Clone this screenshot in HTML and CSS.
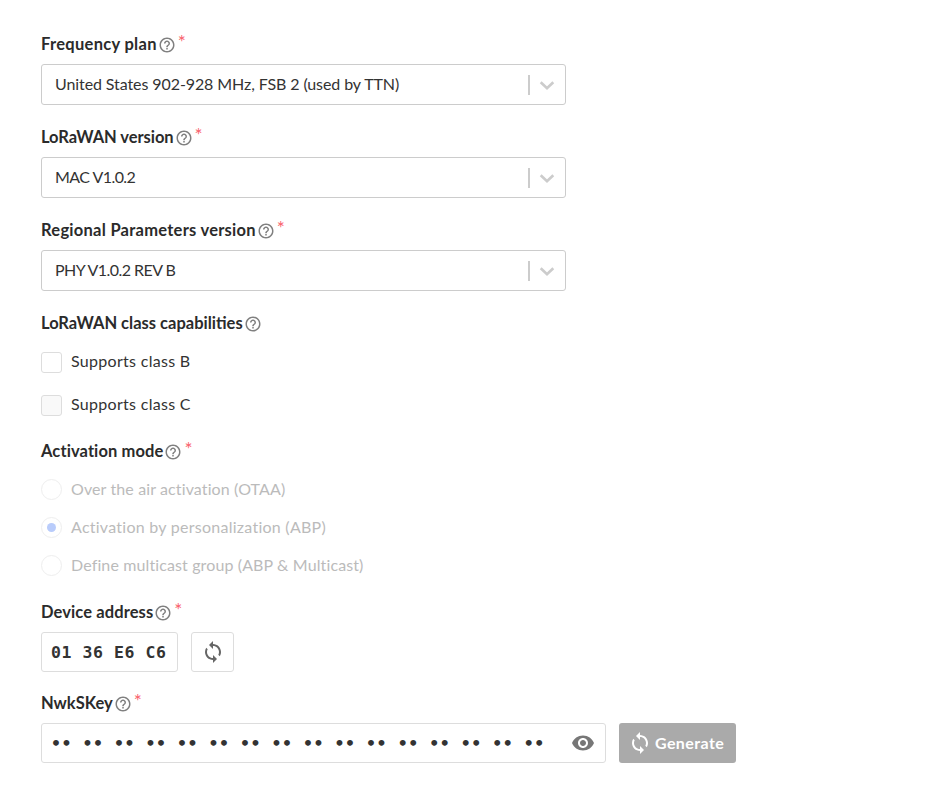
FILE: index.html
```html
<!DOCTYPE html>
<html lang="en">
<head>
    <meta charset="UTF-8">
    <meta name="viewport" content="width=device-width, initial-scale=1.0">
    <title>Register end device</title>
    <link rel="stylesheet" href="styles.css">
</head>
<body>
    <svg class="sprites" width="0" height="0">
        <symbol id="help" viewBox="0 0 24 24"><path d="M11 18h2v-2h-2v2zm1-16C6.48 2 2 6.48 2 12s4.48 10 10 10 10-4.48 10-10S17.52 2 12 2zm0 18c-4.41 0-8-3.59-8-8s3.59-8 8-8 8 3.59 8 8-3.59 8-8 8zm0-14c-2.21 0-4 1.79-4 4h2c0-1.1.9-2 2-2s2 .9 2 2c0 2-3 1.75-3 5h2c0-2.25 3-2.5 3-5 0-2.21-1.79-4-4-4z"/></symbol>
        <symbol id="sync" viewBox="0 0 24 24"><path d="M12 4V1L8 5l4 4V6c3.31 0 6 2.69 6 6 0 1.01-.25 1.97-.7 2.8l1.46 1.46C19.54 15.03 20 13.57 20 12c0-4.42-3.58-8-8-8zm0 14c-3.31 0-6-2.69-6-6 0-1.01.25-1.97.7-2.8L5.24 7.74C4.46 8.97 4 10.43 4 12c0 4.42 3.58 8 8 8v3l4-4-4-4v3z"/></symbol>
    </svg>

    <form class="device-form">
        <div class="form-group">
            <div class="label label-freq">Frequency plan<svg class="help"><use href="#help"/></svg><span class="req">*</span></div>
            <div class="select">
                <span>United States 902-928 MHz, FSB 2 (used by TTN)</span>
                <i class="sep"></i>
                <svg class="chevron" viewBox="0 0 20 20"><path d="M3 7l7 6.5L17 7" /></svg>
            </div>
        </div>

        <div class="form-group">
            <div class="label label-lora">LoRaWAN version<svg class="help"><use href="#help"/></svg><span class="req">*</span></div>
            <div class="select">
                <span class="version">MAC V1.0.2</span>
                <i class="sep"></i>
                <svg class="chevron" viewBox="0 0 20 20"><path d="M3 7l7 6.5L17 7" /></svg>
            </div>
        </div>

        <div class="form-group">
            <div class="label label-region">Regional Parameters version<svg class="help"><use href="#help"/></svg><span class="req">*</span></div>
            <div class="select">
                <span class="version">PHY V1.0.2 REV B</span>
                <i class="sep"></i>
                <svg class="chevron" viewBox="0 0 20 20"><path d="M3 7l7 6.5L17 7" /></svg>
            </div>
        </div>

        <div class="form-group checks">
            <div class="label">LoRaWAN class capabilities<svg class="help"><use href="#help"/></svg></div>
            <div class="check-row"><i class="checkbox"></i><span>Supports class B</span></div>
            <div class="check-row"><i class="checkbox grey"></i><span>Supports class C</span></div>
        </div>

        <div class="form-group radios">
            <div class="label label-mode">Activation mode<svg class="help"><use href="#help"/></svg><span class="req">*</span></div>
            <div class="radio-row"><i class="radio"></i><span>Over the air activation (OTAA)</span></div>
            <div class="radio-row"><i class="radio on"></i><span class="abp">Activation by personalization (ABP)</span></div>
            <div class="radio-row"><i class="radio"></i><span>Define multicast group (ABP &amp; Multicast)</span></div>
        </div>

        <div class="form-group">
            <div class="label label-device">Device address<svg class="help"><use href="#help"/></svg><span class="req">*</span></div>
            <div class="input-row">
                <div class="input mono addr">01 36 E6 C6</div>
                <div class="icon-btn"><svg class="sync"><use href="#sync"/></svg></div>
            </div>
        </div>

        <div class="form-group">
            <div class="label">NwkSKey<svg class="help"><use href="#help"/></svg><span class="req">*</span></div>
            <div class="input-row">
                <div class="input key">
                    <span class="mono dots">•• •• •• •• •• •• •• •• •• •• •• •• •• •• •• ••</span>
                    <svg class="eye" viewBox="0 0 24 24"><path d="M12 4.5C7 4.5 2.73 7.61 1 12c1.73 4.39 6 7.5 11 7.5s9.27-3.11 11-7.5c-1.73-4.39-6-7.5-11-7.5zM12 17c-2.76 0-5-2.24-5-5s2.24-5 5-5 5 2.24 5 5-2.24 5-5 5zm0-8c-1.66 0-3 1.34-3 3s1.34 3 3 3 3-1.34 3-3-1.34-3-3-3z"/></svg>
                </div>
                <div class="generate"><svg class="sync"><use href="#sync"/></svg><span>Generate</span></div>
            </div>
        </div>
    </form>
</body>
</html>
```

FILE: styles.css
```css
body {
    margin: 0;
    background-color: #fff;
    color: #333;
    font-family: Lato, "Noto Sans", sans-serif;
    font-size: 16px;
}

.sprites {
    position: absolute;
}

.device-form {
    padding: 34px 0 0 41px;
}

.form-group {
    margin-bottom: 21px;
}

.form-group:nth-child(-n+3) {
    margin-bottom: 22px;
}

.label {
    display: flex;
    align-items: center;
    height: 20px;
    margin-bottom: 10px;
    font-size: 16.5px;
    font-weight: 700;
    color: #2b2b2b;
}

.label-freq { letter-spacing: .3px; }
.label-lora { letter-spacing: -.05px; }
.label-region { letter-spacing: .26px; }
.label-mode { letter-spacing: .1px; }
.label-device { letter-spacing: .1px; }

.help {
    width: 18px;
    height: 18px;
    margin: 1px 0 0 1px;
    fill: #808080;
}

.req {
    margin: -6px 0 0 2px;
    color: #f9606b;
    font-size: 19px;
    font-weight: 400;
}

.select {
    display: flex;
    align-items: center;
    box-sizing: border-box;
    width: 525px;
    height: 41px;
    padding: 0 9px 0 13px;
    border: 1px solid #ccc;
    border-radius: 3px;
}

.select span {
    flex: 1;
    margin-top: -2px;
    letter-spacing: -.09px;
}

.select .version {
    letter-spacing: -.55px;
}

.sep {
    width: 2px;
    height: 20px;
    margin-right: 8px;
    background-color: #ccc;
}

.chevron {
    width: 18px;
    height: 18px;
    fill: none;
    stroke: #ccc;
    stroke-width: 3;
}

.checks {
    margin-bottom: 25px;
}

.checks .label {
    margin-bottom: 18px;
}

.check-row {
    display: flex;
    align-items: center;
    height: 22px;
    margin-bottom: 21px;
    letter-spacing: .3px;
}

.check-row:last-child {
    margin-bottom: 0;
}

.check-row span {
    margin-top: -4px;
}

.checkbox {
    box-sizing: border-box;
    width: 21px;
    height: 21px;
    margin-right: 9px;
    border: 1px solid #ddd;
    border-radius: 3px;
}

.checkbox.grey {
    background-color: #f9f9f9;
}

.radios {
    margin-bottom: 26px;
    color: #bbb;
}

.radios .label {
    margin-bottom: 17px;
    color: #2b2b2b;
}

.radio-row {
    display: flex;
    align-items: center;
    height: 22px;
    margin-bottom: 16px;
    letter-spacing: .12px;
}

.radio-row:last-child {
    margin-bottom: 0;
}

.radio-row span {
    margin-top: -2px;
}

.radio-row .abp {
    letter-spacing: .26px;
}

.radio {
    position: relative;
    box-sizing: border-box;
    width: 21px;
    height: 21px;
    margin-right: 9px;
    border: 1px solid #eee;
    border-radius: 50%;
}

.radio.on::after {
    content: "";
    position: absolute;
    left: 5px;
    top: 5px;
    width: 9px;
    height: 9px;
    border-radius: 50%;
    background-color: #b9ccfb;
}

.input-row {
    display: flex;
    gap: 13px;
}

.input {
    display: flex;
    align-items: center;
    box-sizing: border-box;
    height: 40px;
    border: 1px solid #ddd;
    border-radius: 3px;
}

.mono {
    font-family: "DejaVu Sans Mono", "Liberation Mono", monospace;
    font-size: 16.5px;
    font-weight: 700;
    letter-spacing: .57px;
    color: #333;
    white-space: pre;
}

.addr {
    width: 137px;
    padding-left: 9px;
}

.icon-btn {
    display: flex;
    align-items: center;
    justify-content: center;
    box-sizing: border-box;
    width: 43px;
    height: 40px;
    border: 1px solid #ddd;
    border-radius: 3px;
}

.sync {
    width: 24px;
    height: 24px;
    fill: #666;
}

.key {
    width: 565px;
    padding: 0 10px 0 9px;
    justify-content: space-between;
}

.eye {
    width: 24px;
    height: 24px;
    fill: #777;
}

.generate {
    display: flex;
    align-items: center;
    gap: 3px;
    box-sizing: border-box;
    width: 117px;
    height: 40px;
    padding-left: 9px;
    border-radius: 3px;
    background-color: #aaa;
    color: #fff;
    font-weight: 700;
    letter-spacing: .4px;
}

.generate span {
    margin-top: -2px;
}

.generate .sync {
    fill: #fff;
}
```
